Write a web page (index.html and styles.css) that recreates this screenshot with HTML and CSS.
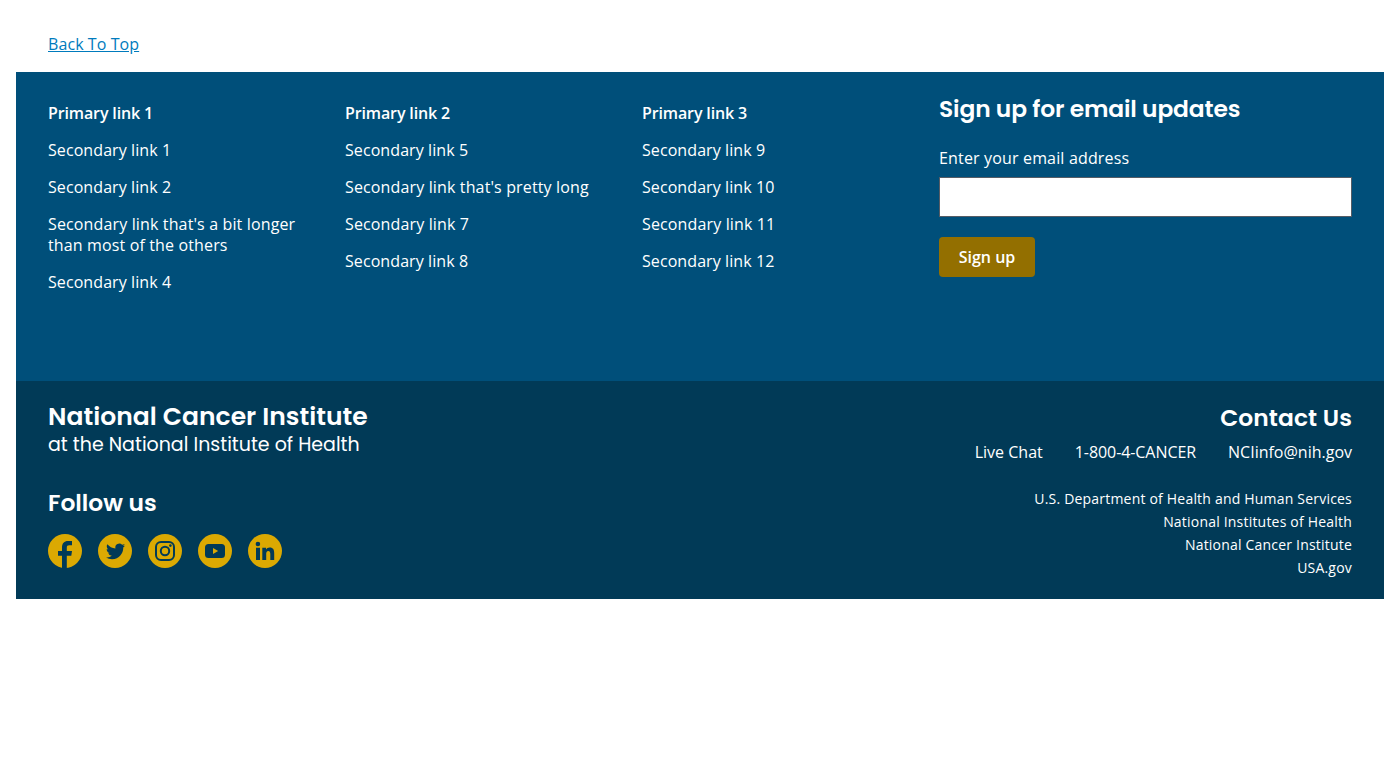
FILE: index.html
```html
<!DOCTYPE html>
<html lang="en">
<head>
<meta charset="utf-8">
<title>Footer</title>
<link rel="stylesheet" href="styles.css">
</head>
<body>
<footer class="footer">
  <div class="back"><a href="#">Back To Top</a></div>
  <div class="primary">
    <nav class="links">
      <section class="col"><h3>Primary link 1</h3><ul><li>Secondary link 1</li><li>Secondary link 2</li><li>Secondary link that's a bit longer than most of the others</li><li>Secondary link 4</li></ul></section>
      <section class="col"><h3>Primary link 2</h3><ul><li>Secondary link 5</li><li class="long">Secondary link that's pretty long</li><li>Secondary link 7</li><li>Secondary link 8</li></ul></section>
      <section class="col"><h3>Primary link 3</h3><ul><li>Secondary link 9</li><li>Secondary link 10</li><li>Secondary link 11</li><li>Secondary link 12</li></ul></section>
    </nav>
    <form class="signup">
      <h3 class="heading signup-title">Sign up for email updates</h3>
      <label for="email">Enter your email address</label>
      <input id="email" type="email">
      <button type="button">Sign up</button>
    </form>
  </div>
  <div class="secondary">
    <div class="brand">
      <div class="name">National Cancer Institute</div>
      <div class="sub">at the National Institute of Health</div>
      <h3 class="heading follow">Follow us</h3>
      <div class="social">
        <svg viewBox="0 0 34 34"><circle class="disc" cx="17" cy="17" r="17"/><path class="mark" d="M14 34.5V21.8H10V17H14V13.4C14 9.300 16.200 7 20 7H24V11.300H21.200C19.400 11.300 18.800 12.100 18.800 13.700V17H24L23.300 21.800H18.800V34.500Z"/></svg>
        <svg viewBox="0 0 34 34"><circle class="disc" cx="17" cy="17" r="17"/><path class="mark" transform="translate(8 7.800) scale(.8)" d="M23.950 4.570a10 10 0 0 1-2.820.770 4.960 4.960 0 0 0 2.160-2.720c-.950.550-2 .950-3.130 1.180a4.920 4.920 0 0 0-8.380 4.480C7.690 8.090 4.070 6.130 1.640 3.160a4.820 4.820 0 0 0-.670 2.480c0 1.700.870 3.210 2.190 4.090a4.900 4.900 0 0 1-2.230-.610v.060a4.920 4.920 0 0 0 3.950 4.830 5 5 0 0 1-2.210.080 4.940 4.940 0 0 0 4.600 3.420A9.870 9.870 0 0 1 0 19.540a13.990 13.990 0 0 0 7.550 2.210c9.050 0 14-7.500 14-13.980l-.020-.630a9.940 9.940 0 0 0 2.420-2.570z"/></svg>
        <svg viewBox="0 0 34 34"><circle class="disc" cx="17" cy="17" r="17"/><rect class="line" x="8" y="8" width="18" height="18" rx="5"/><circle class="line" cx="17" cy="17" r="4.200"/><circle class="mark" cx="22.400" cy="11.600" r="1.300"/></svg>
        <svg viewBox="0 0 34 34"><circle class="disc" cx="17" cy="17" r="17"/><rect class="mark" x="7" y="10" width="20" height="14" rx="3.500"/><path class="disc" d="M15 14V20L20.200 17Z"/></svg>
        <svg viewBox="0 0 34 34"><circle class="disc" cx="17" cy="17" r="17"/><circle class="mark" cx="9.900" cy="10" r="2.300"/><path class="mark" d="M8 13.800H12V26H8ZM14.300 13.800H18V15.500C18.700 14.200 20 13.500 21.700 13.500C25.300 13.500 26.200 15.900 26.200 19.200V26H22.300V20C22.300 18.300 22 16.900 20.300 16.900C18.600 16.900 18.200 18.300 18.200 20V26H14.300Z"/></svg>
      </div>
    </div>
    <div class="contact">
      <h3 class="heading contact-title">Contact Us</h3>
      <div class="ways"><a>Live Chat</a><a class="phone">1-800-4-CANCER</a><a>NCIinfo@nih.gov</a></div>
      <ul class="agencies"><li>U.S. Department of Health and Human Services</li><li>National Institutes of Health</li><li>National Cancer Institute</li><li>USA.gov</li></ul>
    </div>
  </div>
</footer>
</body>
</html>
```

FILE: styles.css
```css
* { box-sizing: border-box; }
body { margin: 0; padding: 16px; font: 16px/21px "Open Sans", sans-serif; color: #fff; }
h3, ul { margin: 0; padding: 0; list-style: none; }
.back { height: 56px; padding: 18px 32px; }
.back a { color: #007bbd; letter-spacing: .08px; }
.primary { display: flex; height: 309px; padding: 0 32px; background: #004f7a; }
.links { display: flex; gap: 32px; width: 891px; padding-top: 31px; }
.col { width: 265px; }
.col h3 { font-size: 16px; font-weight: 600; letter-spacing: -.13px; }
.col li { margin-top: 16px; letter-spacing: .08px; }
.col li:nth-child(3), .col .long { letter-spacing: .14px; }
.signup { flex: 1; padding-top: 22px; }
.heading { font: 600 23.36px/30px Poppins, "Open Sans", sans-serif; white-space: nowrap; }
.signup-title { letter-spacing: -.14px; }
.signup label { display: block; margin-top: 24px; letter-spacing: .16px; }
.signup input { display: block; width: 100%; height: 40px; margin: 8px 0 20px; border: 1px solid #565c65; }
.signup button { width: 96px; height: 40px; padding: 0; border: 0; border-radius: 4px; background: #936f00; color: #fff; font: 600 16px "Open Sans", sans-serif; }
.secondary { display: flex; justify-content: space-between; height: 218px; padding: 20px 32px; background: #013a57; }
.name { font: 600 25.04px/32px Poppins, sans-serif; letter-spacing: .03px; }
.sub { font: 19px/24px Poppins, sans-serif; }
.follow { margin-top: 31px; }
.social { display: flex; gap: 16px; margin-top: 16px; }
.social svg { width: 34px; height: 34px; }
.disc { fill: #dba902; }
.mark { fill: #013a57; }
.line { fill: none; stroke: #013a57; stroke-width: 2; }
.contact { padding-top: 2px; text-align: right; }
.contact-title { letter-spacing: .08px; }
.ways { display: flex; justify-content: flex-end; gap: 32px; margin: 9px 0 24px; }
.phone { letter-spacing: -.07px; }
.agencies { font-size: 14px; line-height: 23px; letter-spacing: .2px; }
```
